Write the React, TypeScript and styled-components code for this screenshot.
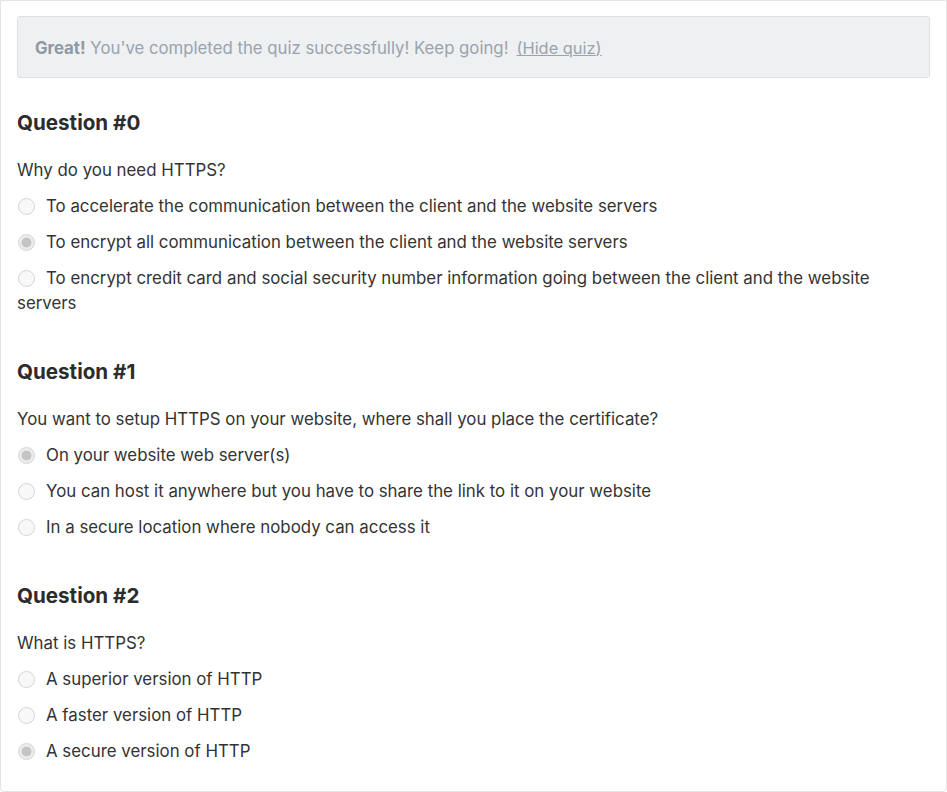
import React from "react";
import styled, { createGlobalStyle } from "styled-components";

const Global = createGlobalStyle`
  html, body { margin: 0; padding: 0; background: #fff; }
  body { font-family: Inter, "Noto Sans", sans-serif; color: #333; }
`;

const Frame = styled.div`
  box-sizing: border-box;
  width: 947px;
  height: 792px;
  border: 1px solid #e4e4e4;
  border-radius: 0 0 4px 4px;
  padding: 15px 16px 0 16px;
  overflow: hidden;
`;

const Banner = styled.div`
  background: #eef0f2;
  border: 1px solid #dde1e5;
  border-radius: 3px;
  padding: 20px 17px 18px;
  font-size: 16.75px;
  line-height: 22px;
  color: #9aa3ad;
`;

const Strong = styled.strong`
  font-weight: 700;
  color: #8f99a4;
`;

const HideLink = styled.a`
  color: #9aa3ad;
  margin-left: 8px;
  font-size: 16.4px;
  & span { text-decoration: underline; }
`;

const Section = styled.section`
  margin-top: 43px;
  &:first-of-type { margin-top: 32px; }
`;

const Heading = styled.h3`
  margin: 0 0 22px;
  font-size: 20.6px;
  line-height: 26px;
  font-weight: 700;
  color: #2c2c2c;
`;

const Prompt = styled.p`
  margin: 0 0 11px;
  font-size: 16.85px;
  line-height: 25px;
`;

const Option = styled.label`
  display: block;
  font-size: 16.85px;
  line-height: 25px;
  margin-bottom: 11px;
`;

const Radio = styled.span<{ $checked?: boolean }>`
  display: inline-block;
  box-sizing: border-box;
  width: 17px;
  height: 17px;
  border-radius: 50%;
  border: 1px solid #d4d4d4;
  background: ${(p) =>
    p.$checked
      ? "radial-gradient(circle, #c4c4c4 0 4.5px, #ececec 5.3px)"
      : "#f8f8f8"};
  vertical-align: -3px;
  margin: 0 11px 0 1px;
`;

const quiz = [
  {
    q: "Why do you need HTTPS?",
    opts: [
      "To accelerate the communication between the client and the website servers",
      "To encrypt all communication between the client and the website servers",
      "To encrypt credit card and social security number information going between the client and the website servers",
    ],
    ans: 1,
  },
  {
    q: "You want to setup HTTPS on your website, where shall you place the certificate?",
    opts: [
      "On your website web server(s)",
      "You can host it anywhere but you have to share the link to it on your website",
      "In a secure location where nobody can access it",
    ],
    ans: 0,
  },
  {
    q: "What is HTTPS?",
    opts: [
      "A superior version of HTTP",
      "A faster version of HTTP",
      "A secure version of HTTP",
    ],
    ans: 2,
  },
];

export default function App() {
  return (
    <>
      <Global />
      <Frame>
        <Banner>
          <Strong>Great!</Strong> You've completed the quiz successfully! Keep going!
          <HideLink href="#">
            (<span>Hide quiz</span>)
          </HideLink>
        </Banner>
        {quiz.map((item, i) => (
          <Section key={i}>
            <Heading>Question #{i}</Heading>
            <Prompt>{item.q}</Prompt>
            {item.opts.map((o, j) => (
              <Option key={j}>
                <Radio $checked={j === item.ans} />
                {o}
              </Option>
            ))}
          </Section>
        ))}
      </Frame>
    </>
  );
}
